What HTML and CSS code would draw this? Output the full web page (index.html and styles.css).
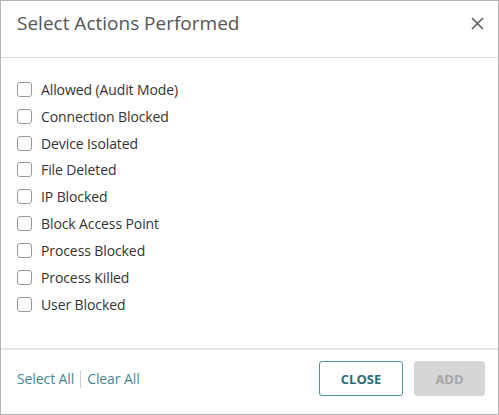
FILE: index.html
```html
<!DOCTYPE html>
<html>
<head>
<meta charset="utf-8">
<link rel="stylesheet" href="styles.css">
</head>
<body>
<div class="dialog">
  <div class="header">
    <h1 class="title">Select Actions Performed</h1>
    <button class="x-btn" aria-label="Close">
      <svg width="13" height="13" viewBox="0 0 13 13"><path d="M1 1 L12 12 M12 1 L1 12" stroke="#555" stroke-width="1.5" fill="none"/></svg>
    </button>
  </div>
  <div class="body">
    <label class="row"><span class="box"></span>Allowed (Audit Mode)</label>
    <label class="row"><span class="box"></span>Connection Blocked</label>
    <label class="row"><span class="box"></span>Device Isolated</label>
    <label class="row"><span class="box"></span>File Deleted</label>
    <label class="row"><span class="box"></span>IP Blocked</label>
    <label class="row"><span class="box"></span>Block Access Point</label>
    <label class="row"><span class="box"></span>Process Blocked</label>
    <label class="row"><span class="box"></span>Process Killed</label>
    <label class="row"><span class="box"></span>User Blocked</label>
  </div>
  <div class="footer">
    <div class="links">
      <a class="link">Select All</a>
      <span class="sep"></span>
      <a class="link">Clear All</a>
    </div>
    <div class="buttons">
      <button class="btn btn-close">CLOSE</button>
      <button class="btn btn-add">ADD</button>
    </div>
  </div>
</div>
</body>
</html>
```
FILE: styles.css
```css
* { box-sizing: border-box; }
html, body { margin: 0; padding: 0; background: #fff; }
body { font-family: "Open Sans", "Liberation Sans", sans-serif; }
.dialog {
  width: 499px;
  height: 415px;
  border: 1px solid #b5b5b5;
  display: flex;
  flex-direction: column;
}
.header {
  height: 57px;
  border-bottom: 1px solid #dcdcdc;
  display: flex;
  align-items: center;
  justify-content: space-between;
  padding: 0 14px 12px 16px;
}
.title {
  margin: 0;
  font-size: 19px;
  font-weight: 400;
  color: #555;
  letter-spacing: 0;
}
.x-btn {
  border: 0;
  background: none;
  padding: 0;
  width: 13px;
  height: 13px;
  display: flex;
}
.body {
  flex: 1;
  padding: 18px 16px 0 16px;
  display: flex;
  flex-direction: column;
}
.row {
  height: 26.85px;
  display: flex;
  align-items: center;
  font-size: 14px;
  letter-spacing: -0.1px;
  color: #333;
}
.box {
  width: 15px;
  height: 15px;
  border: 1px solid #9a9a9a;
  border-radius: 3px;
  margin-right: 9px;
  flex: none;
}
.footer {
  height: 66px;
  border-top: 2px solid #e4e4e4;
  display: flex;
  justify-content: space-between;
  align-items: flex-start;
  padding: 11px 13px 0 16px;
}
.links {
  display: flex;
  align-items: center;
  height: 35px;
}
.link {
  font-size: 14px;
  letter-spacing: -0.1px;
  color: #3f8894;
}
.sep {
  width: 1px;
  height: 18px;
  background: #cfcfcf;
  margin: 0 6px 0 6px;
}
.buttons {
  display: flex;
  gap: 11px;
}
.btn {
  height: 35px;
  font-family: "Open Sans", "Liberation Sans", sans-serif;
  font-size: 13px;
  font-weight: 700;
  border-radius: 3px;
  padding: 0;
}
.btn-close {
  width: 84px;
  background: #fff;
  border: 1px solid #4f929c;
  color: #2b6d78;
}
.btn-add {
  width: 71px;
  background: #d6d6d6;
  border: 1px solid #d6d6d6;
  color: #a6a6a6;
}
```
